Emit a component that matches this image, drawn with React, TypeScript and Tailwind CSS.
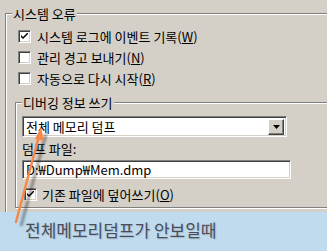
const font = { fontFamily: '"Noto Sans CJK KR", "Noto Sans", sans-serif' };

function Check({ checked }: { checked?: boolean }) {
  return (
    <span className="w-[13px] h-[13px] shrink-0 bg-white border-t border-l border-[#808080] border-r border-b border-r-white border-b-white shadow-[inset_1px_1px_0_#404040,inset_-1px_-1px_0_#d4d0c8] flex items-center justify-center">
      {checked && (
        <svg width="7" height="7" viewBox="0 0 7 7">
          <path d="M0 2 L0 4 L2 6 L7 1 L7 -1 L2 4 Z" fill="#000" />
        </svg>
      )}
    </span>
  );
}

function Label({ text, hot }: { text: string; hot: string }) {
  return (
    <span className="text-[13px] leading-[15px] text-black whitespace-nowrap">
      {text}(<span className="underline underline-offset-1">{hot}</span>)
    </span>
  );
}

function Row({ checked, text, hot }: { checked?: boolean; text: string; hot: string }) {
  return (
    <div className="flex items-center gap-[6px] h-[21px]">
      <Check checked={checked} />
      <Label text={text} hot={hot} />
    </div>
  );
}

function Sunken({ className, children }: { className: string; children?: React.ReactNode }) {
  return (
    <div
      className={`bg-white border border-t-[#808080] border-l-[#808080] border-r-white border-b-white shadow-[inset_1px_1px_0_#404040,inset_-1px_-1px_0_#d4d0c8] ${className}`}
    >
      {children}
    </div>
  );
}

export default function App() {
  return (
    <div className="relative w-[327px] h-[251px] overflow-hidden bg-[#d4d0c8] flex flex-col" style={font}>
      <div className="h-[212px] pl-[5px] pt-[13px] overflow-hidden">
        {/* 시스템 오류 */}
        <div className="w-[400px] h-[260px] border-t border-l border-[#808080] shadow-[inset_1px_1px_0_#fff]">
          <div className="ml-[6px] -mt-[8px] w-fit px-[1px] bg-[#d4d0c8] text-[13px] leading-[15px] text-black">
            시스템 오류
          </div>
          <div className="pl-[12px] pt-[5px] flex flex-col">
            <Row checked text="시스템 로그에 이벤트 기록" hot="W" />
            <Row text="관리 경고 보내기" hot="N" />
            <Row text="자동으로 다시 시작" hot="R" />
          </div>

          {/* 디버깅 정보 쓰기 */}
          <div className="ml-[9px] mt-[13px] w-[400px] h-[106px] border border-[#808080] shadow-[inset_1px_1px_0_#fff,1px_1px_0_#fff]">
            <div className="ml-[6px] -mt-[8px] w-fit px-[1px] bg-[#d4d0c8] text-[13px] leading-[15px] text-black">
              디버깅 정보 쓰기
            </div>
            <div className="pl-[6px] pt-[6px] flex flex-col">
              <Sunken className="w-[265px] h-[21px] flex items-center justify-between pl-[3px] pr-[2px]">
                <span className="text-[13px] leading-[15px] text-black">전체 메모리 덤프</span>
                <span className="w-[16px] h-[16px] bg-[#d4d0c8] border border-t-white border-l-white border-r-[#404040] border-b-[#404040] shadow-[inset_-1px_-1px_0_#808080] flex items-center justify-center">
                  <svg width="7" height="4" viewBox="0 0 7 4">
                    <path d="M0 0 H7 L3.5 4 Z" fill="#000" />
                  </svg>
                </span>
              </Sunken>
              <div className="mt-[4px] text-[13px] leading-[15px] text-black">덤프 파일:</div>
              <Sunken className="mt-[4px] w-[269px] h-[19px] flex items-center pl-[3px]">
                <span className="text-[13px] leading-[15px] text-black">D:₩Dump₩Mem.dmp</span>
              </Sunken>
              <div className="mt-[7px] ml-[2px] flex items-center gap-[5px] h-[16px]">
                <Check checked />
                <Label text="기존 파일에 덮어쓰기" hot="O" />
              </div>
            </div>
          </div>
        </div>
      </div>

      <div className="flex-1 bg-[#c0dbee] pl-[25px] pt-[6px]">
        <span className="text-[17px] leading-[21px] text-[#4a4d5a] whitespace-nowrap [text-shadow:1px_1px_1px_rgba(0,0,0,0.15)]">
          전체메모리덤프가 안보일때
        </span>
      </div>

      {/* arrow overlay */}
      <svg className="absolute left-0 top-0 pointer-events-none" width="327" height="251" viewBox="0 0 327 251">
        <defs>
          <filter id="blur" x="-50%" y="-50%" width="200%" height="200%">
            <feGaussianBlur stdDeviation="1.2" />
          </filter>
        </defs>
        <path d="M21 226 L46 134" stroke="#000" strokeOpacity="0.35" strokeWidth="3" filter="url(#blur)" />
        <path d="M16 222 L39 136" stroke="#f5884a" strokeWidth="2.5" strokeLinecap="round" />
        <path d="M41 127 L35 139 L44 141 Z" fill="#f5884a" />
      </svg>
    </div>
  );
}
